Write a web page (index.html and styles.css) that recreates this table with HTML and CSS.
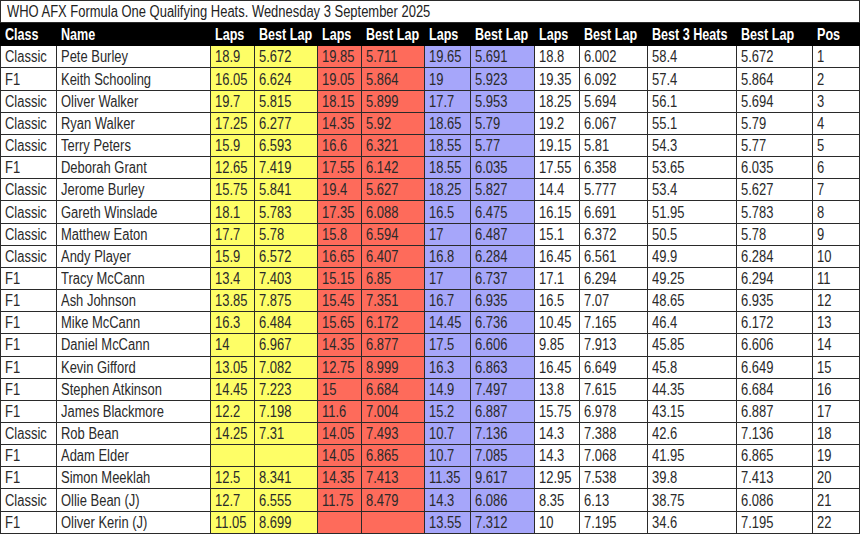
FILE: index.html
```html
<!DOCTYPE html>
<html>
<head>
<meta charset="utf-8">
<link rel="stylesheet" href="styles.css">
</head>
<body>
<table class="sheet">
<colgroup>
<col class="c-class"><col class="c-name">
<col class="c-laps h1"><col class="c-best h1">
<col class="c-laps h2"><col class="c-best h2">
<col class="c-laps3 h3"><col class="c-best h3">
<col class="c-laps4"><col class="c-best4">
<col class="c-b3"><col class="c-bl"><col class="c-pos">
</colgroup>
<tr class="title"><td colspan="13"><span>WHO AFX Formula One Qualifying Heats. Wednesday 3 September 2025</span></td></tr>
<tr class="head"><th><span>Class</span></th><th><span>Name</span></th><th><span>Laps</span></th><th><span>Best Lap</span></th><th><span>Laps</span></th><th><span>Best Lap</span></th><th><span>Laps</span></th><th><span>Best Lap</span></th><th><span>Laps</span></th><th><span>Best Lap</span></th><th><span>Best 3 Heats</span></th><th><span>Best Lap</span></th><th><span>Pos</span></th></tr>
<tr><td><span>Classic</span></td><td><span>Pete Burley</span></td><td><span>18.9</span></td><td><span>5.672</span></td><td><span>19.85</span></td><td><span>5.711</span></td><td><span>19.65</span></td><td><span>5.691</span></td><td><span>18.8</span></td><td><span>6.002</span></td><td><span>58.4</span></td><td><span>5.672</span></td><td><span>1</span></td></tr>
<tr><td><span>F1</span></td><td><span>Keith Schooling</span></td><td><span>16.05</span></td><td><span>6.624</span></td><td><span>19.05</span></td><td><span>5.864</span></td><td><span>19</span></td><td><span>5.923</span></td><td><span>19.35</span></td><td><span>6.092</span></td><td><span>57.4</span></td><td><span>5.864</span></td><td><span>2</span></td></tr>
<tr><td><span>Classic</span></td><td><span>Oliver Walker</span></td><td><span>19.7</span></td><td><span>5.815</span></td><td><span>18.15</span></td><td><span>5.899</span></td><td><span>17.7</span></td><td><span>5.953</span></td><td><span>18.25</span></td><td><span>5.694</span></td><td><span>56.1</span></td><td><span>5.694</span></td><td><span>3</span></td></tr>
<tr><td><span>Classic</span></td><td><span>Ryan Walker</span></td><td><span>17.25</span></td><td><span>6.277</span></td><td><span>14.35</span></td><td><span>5.92</span></td><td><span>18.65</span></td><td><span>5.79</span></td><td><span>19.2</span></td><td><span>6.067</span></td><td><span>55.1</span></td><td><span>5.79</span></td><td><span>4</span></td></tr>
<tr><td><span>Classic</span></td><td><span>Terry Peters</span></td><td><span>15.9</span></td><td><span>6.593</span></td><td><span>16.6</span></td><td><span>6.321</span></td><td><span>18.55</span></td><td><span>5.77</span></td><td><span>19.15</span></td><td><span>5.81</span></td><td><span>54.3</span></td><td><span>5.77</span></td><td><span>5</span></td></tr>
<tr><td><span>F1</span></td><td><span>Deborah Grant</span></td><td><span>12.65</span></td><td><span>7.419</span></td><td><span>17.55</span></td><td><span>6.142</span></td><td><span>18.55</span></td><td><span>6.035</span></td><td><span>17.55</span></td><td><span>6.358</span></td><td><span>53.65</span></td><td><span>6.035</span></td><td><span>6</span></td></tr>
<tr><td><span>Classic</span></td><td><span>Jerome Burley</span></td><td><span>15.75</span></td><td><span>5.841</span></td><td><span>19.4</span></td><td><span>5.627</span></td><td><span>18.25</span></td><td><span>5.827</span></td><td><span>14.4</span></td><td><span>5.777</span></td><td><span>53.4</span></td><td><span>5.627</span></td><td><span>7</span></td></tr>
<tr><td><span>Classic</span></td><td><span>Gareth Winslade</span></td><td><span>18.1</span></td><td><span>5.783</span></td><td><span>17.35</span></td><td><span>6.088</span></td><td><span>16.5</span></td><td><span>6.475</span></td><td><span>16.15</span></td><td><span>6.691</span></td><td><span>51.95</span></td><td><span>5.783</span></td><td><span>8</span></td></tr>
<tr><td><span>Classic</span></td><td><span>Matthew Eaton</span></td><td><span>17.7</span></td><td><span>5.78</span></td><td><span>15.8</span></td><td><span>6.594</span></td><td><span>17</span></td><td><span>6.487</span></td><td><span>15.1</span></td><td><span>6.372</span></td><td><span>50.5</span></td><td><span>5.78</span></td><td><span>9</span></td></tr>
<tr><td><span>Classic</span></td><td><span>Andy Player</span></td><td><span>15.9</span></td><td><span>6.572</span></td><td><span>16.65</span></td><td><span>6.407</span></td><td><span>16.8</span></td><td><span>6.284</span></td><td><span>16.45</span></td><td><span>6.561</span></td><td><span>49.9</span></td><td><span>6.284</span></td><td><span>10</span></td></tr>
<tr><td><span>F1</span></td><td><span>Tracy McCann</span></td><td><span>13.4</span></td><td><span>7.403</span></td><td><span>15.15</span></td><td><span>6.85</span></td><td><span>17</span></td><td><span>6.737</span></td><td><span>17.1</span></td><td><span>6.294</span></td><td><span>49.25</span></td><td><span>6.294</span></td><td><span>11</span></td></tr>
<tr><td><span>F1</span></td><td><span>Ash Johnson</span></td><td><span>13.85</span></td><td><span>7.875</span></td><td><span>15.45</span></td><td><span>7.351</span></td><td><span>16.7</span></td><td><span>6.935</span></td><td><span>16.5</span></td><td><span>7.07</span></td><td><span>48.65</span></td><td><span>6.935</span></td><td><span>12</span></td></tr>
<tr><td><span>F1</span></td><td><span>Mike McCann</span></td><td><span>16.3</span></td><td><span>6.484</span></td><td><span>15.65</span></td><td><span>6.172</span></td><td><span>14.45</span></td><td><span>6.736</span></td><td><span>10.45</span></td><td><span>7.165</span></td><td><span>46.4</span></td><td><span>6.172</span></td><td><span>13</span></td></tr>
<tr><td><span>F1</span></td><td><span>Daniel McCann</span></td><td><span>14</span></td><td><span>6.967</span></td><td><span>14.35</span></td><td><span>6.877</span></td><td><span>17.5</span></td><td><span>6.606</span></td><td><span>9.85</span></td><td><span>7.913</span></td><td><span>45.85</span></td><td><span>6.606</span></td><td><span>14</span></td></tr>
<tr><td><span>F1</span></td><td><span>Kevin Gifford</span></td><td><span>13.05</span></td><td><span>7.082</span></td><td><span>12.75</span></td><td><span>8.999</span></td><td><span>16.3</span></td><td><span>6.863</span></td><td><span>16.45</span></td><td><span>6.649</span></td><td><span>45.8</span></td><td><span>6.649</span></td><td><span>15</span></td></tr>
<tr><td><span>F1</span></td><td><span>Stephen Atkinson</span></td><td><span>14.45</span></td><td><span>7.223</span></td><td><span>15</span></td><td><span>6.684</span></td><td><span>14.9</span></td><td><span>7.497</span></td><td><span>13.8</span></td><td><span>7.615</span></td><td><span>44.35</span></td><td><span>6.684</span></td><td><span>16</span></td></tr>
<tr><td><span>F1</span></td><td><span>James Blackmore</span></td><td><span>12.2</span></td><td><span>7.198</span></td><td><span>11.6</span></td><td><span>7.004</span></td><td><span>15.2</span></td><td><span>6.887</span></td><td><span>15.75</span></td><td><span>6.978</span></td><td><span>43.15</span></td><td><span>6.887</span></td><td><span>17</span></td></tr>
<tr><td><span>Classic</span></td><td><span>Rob Bean</span></td><td><span>14.25</span></td><td><span>7.31</span></td><td><span>14.05</span></td><td><span>7.493</span></td><td><span>10.7</span></td><td><span>7.136</span></td><td><span>14.3</span></td><td><span>7.388</span></td><td><span>42.6</span></td><td><span>7.136</span></td><td><span>18</span></td></tr>
<tr><td><span>F1</span></td><td><span>Adam Elder</span></td><td></td><td></td><td><span>14.05</span></td><td><span>6.865</span></td><td><span>10.7</span></td><td><span>7.085</span></td><td><span>14.3</span></td><td><span>7.068</span></td><td><span>41.95</span></td><td><span>6.865</span></td><td><span>19</span></td></tr>
<tr><td><span>F1</span></td><td><span>Simon Meeklah</span></td><td><span>12.5</span></td><td><span>8.341</span></td><td><span>14.35</span></td><td><span>7.413</span></td><td><span>11.35</span></td><td><span>9.617</span></td><td><span>12.95</span></td><td><span>7.538</span></td><td><span>39.8</span></td><td><span>7.413</span></td><td><span>20</span></td></tr>
<tr><td><span>Classic</span></td><td><span>Ollie Bean (J)</span></td><td><span>12.7</span></td><td><span>6.555</span></td><td><span>11.75</span></td><td><span>8.479</span></td><td><span>14.3</span></td><td><span>6.086</span></td><td><span>8.35</span></td><td><span>6.13</span></td><td><span>38.75</span></td><td><span>6.086</span></td><td><span>21</span></td></tr>
<tr><td><span>F1</span></td><td><span>Oliver Kerin (J)</span></td><td><span>11.05</span></td><td><span>8.699</span></td><td></td><td></td><td><span>13.55</span></td><td><span>7.312</span></td><td><span>10</span></td><td><span>7.195</span></td><td><span>34.6</span></td><td><span>7.195</span></td><td><span>22</span></td></tr>
</table>
</body>
</html>
```

FILE: styles.css
```css
html, body {
  margin: 0;
  padding: 0;
  background: #ffffff;
}
.sheet {
  border-collapse: collapse;
  table-layout: fixed;
  width: 860px;
  height: 534px;
  font-family: "Liberation Sans", Arial, sans-serif;
  font-size: 16px;
  color: #2a2a2a;
}
.c-class { width: 56px; }
.c-name { width: 154px; }
.c-laps { width: 44px; }
.c-best { width: 63px; }
.c-laps3 { width: 46px; }
.c-laps4 { width: 45px; }
.c-best4 { width: 68px; }
.c-b3 { width: 89px; }
.c-bl { width: 76px; }
.c-pos { width: 47px; }
.h1 { background: #fefe66; }
.h2 { background: #fe6b5b; }
.h3 { background: #a6a6fa; }
.sheet td, .sheet th {
  border: 1px solid #2a2a2a;
  padding: 0 0 0 4px;
  text-align: left;
  white-space: nowrap;
  overflow: hidden;
  line-height: 20px;
  height: 21px;
}
.sheet span {
  display: inline-block;
  transform: scaleX(0.81);
  transform-origin: 0 50%;
  padding-top: 1px;
}
.sheet .title td {
  background: #ffffff;
  color: #222;
  padding-left: 6px;
}
.sheet .head th {
  background: #000000;
  color: #ffffff;
  font-weight: bold;
  font-size: 17px;
  height: 22px;
  border-color: #000;
}
.sheet .head span {
  transform: scaleX(0.74);
}
```
